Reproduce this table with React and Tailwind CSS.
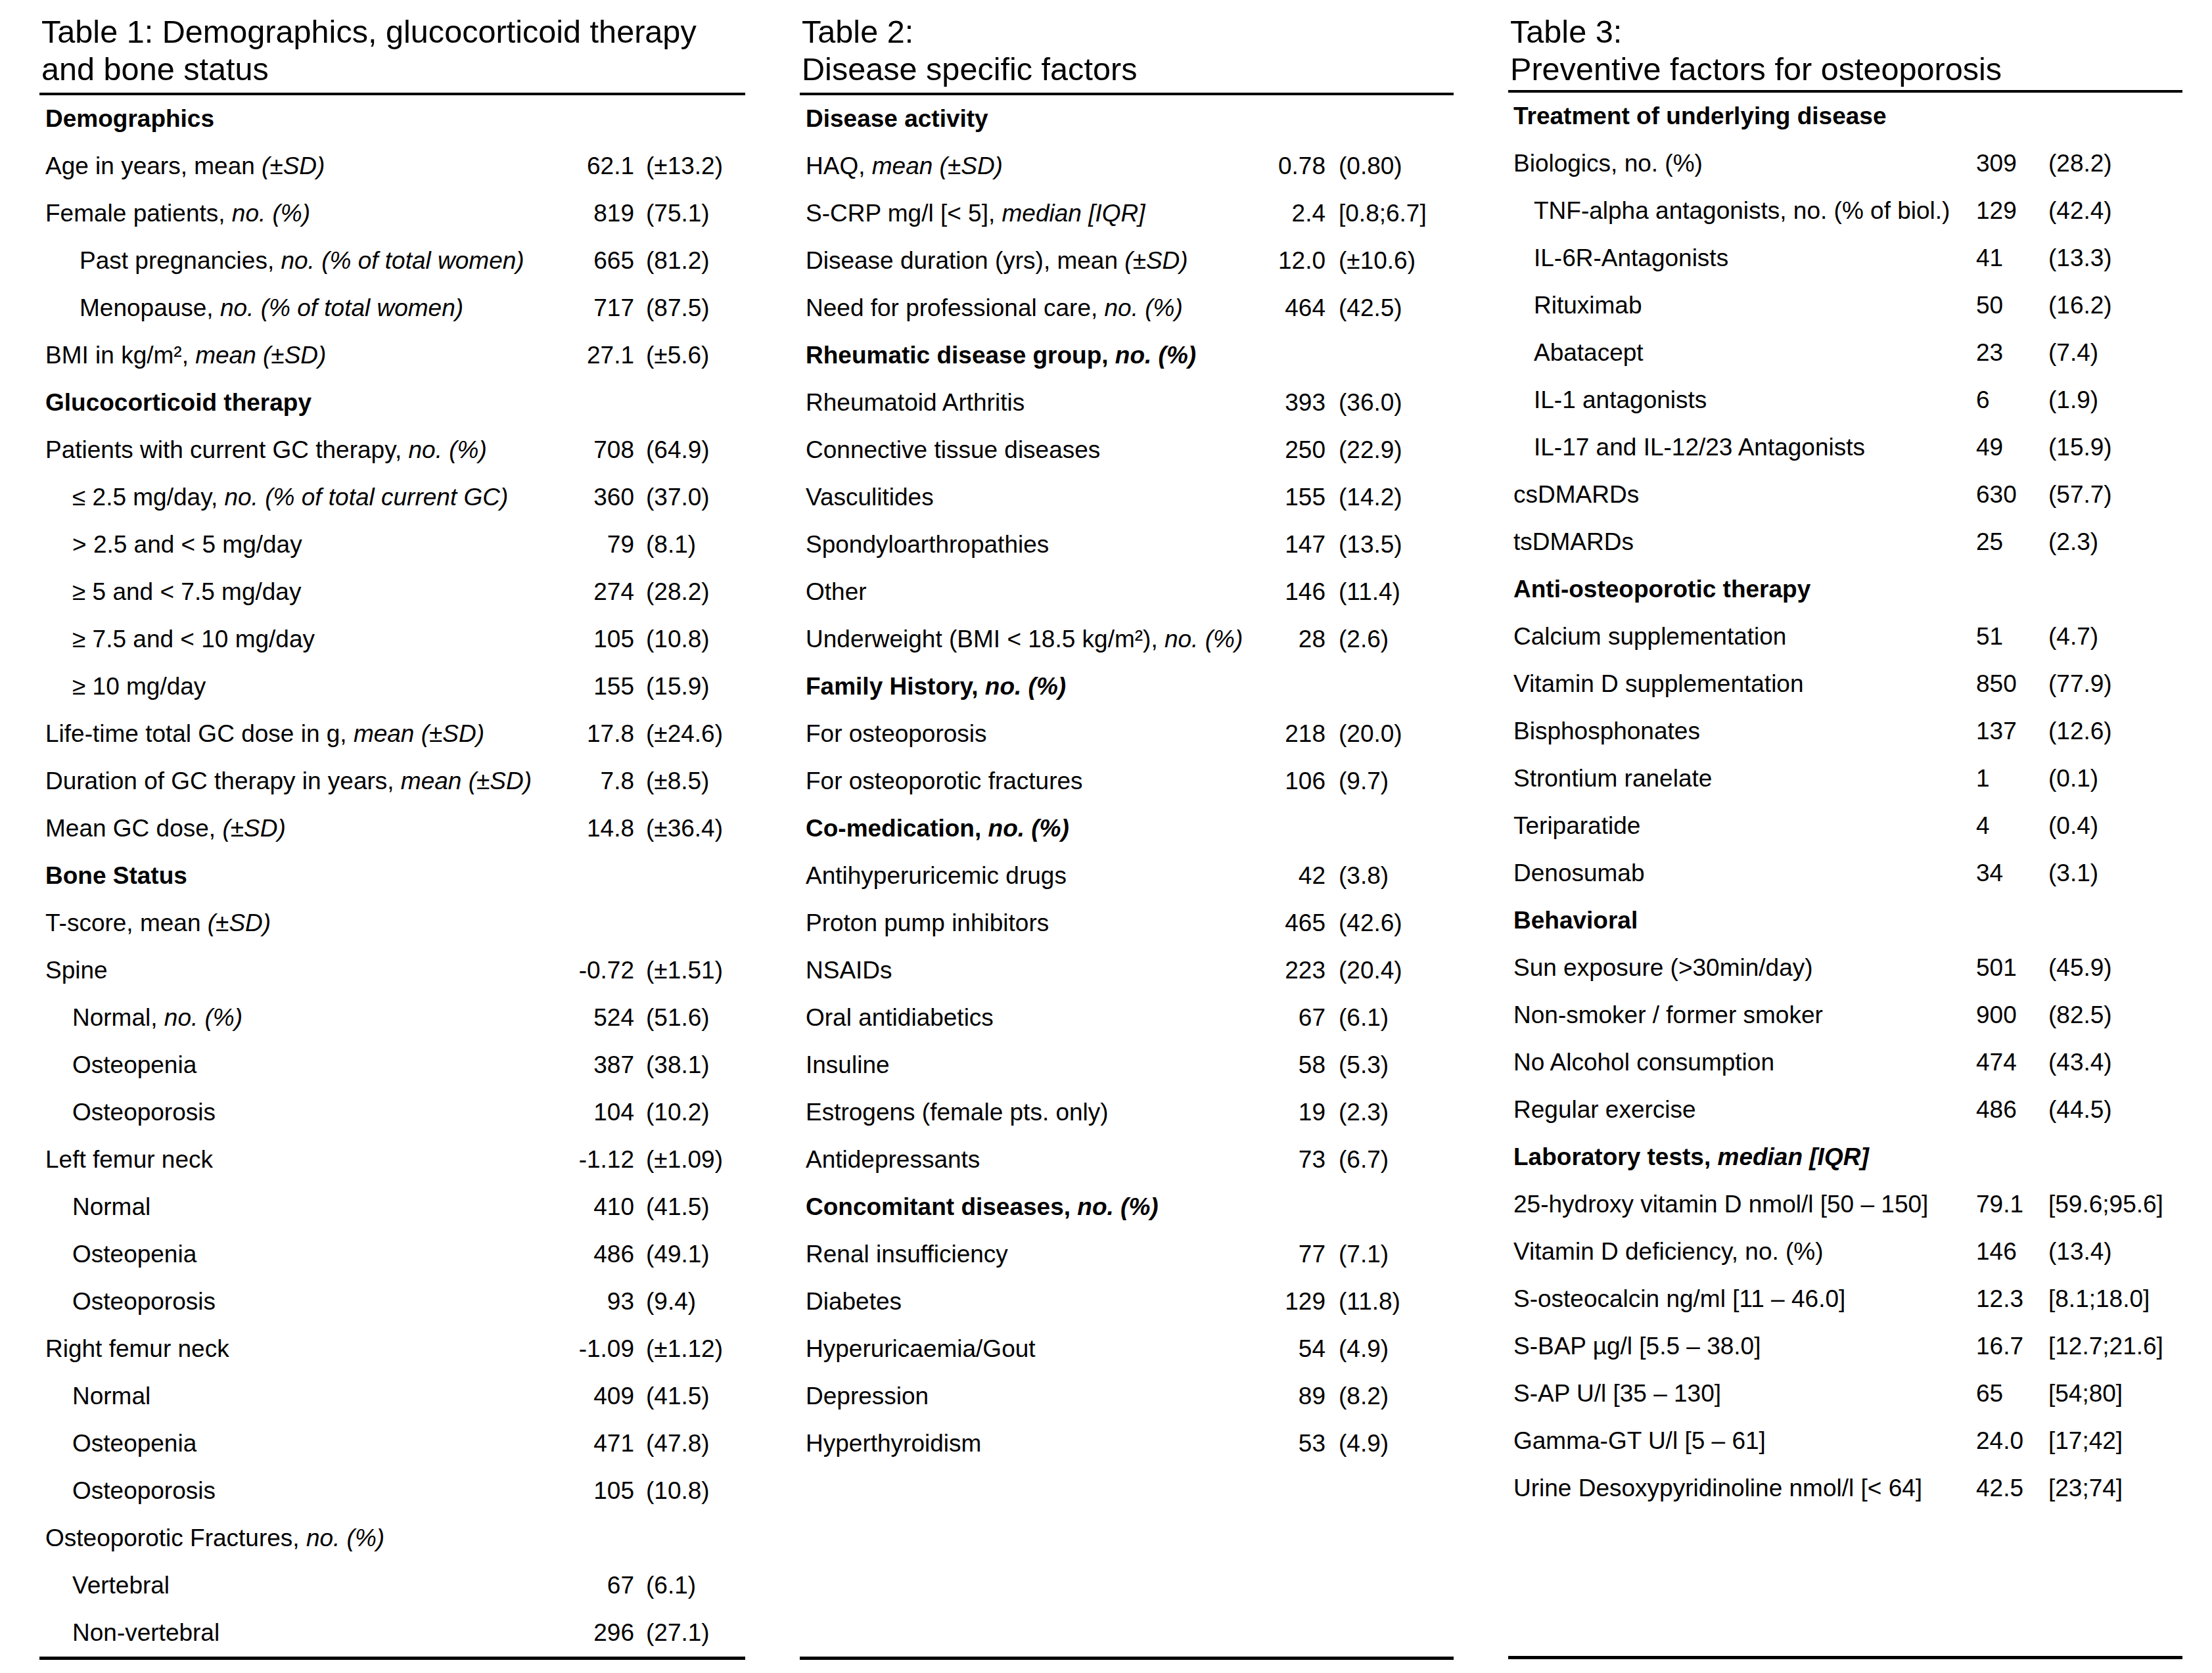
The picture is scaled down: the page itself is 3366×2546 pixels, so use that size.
const I = ({ children }) => <span className="italic">{children}</span>;

const table1 = [
  { h: "Demographics" },
  { l: <>Age in years, mean <I>(±SD)</I></>, n: "62.1", p: "(±13.2)" },
  { l: <>Female patients, <I>no. (%)</I></>, n: "819", p: "(75.1)" },
  { l: <>Past pregnancies, <I>no. (% of total women)</I></>, n: "665", p: "(81.2)", ind: 2 },
  { l: <>Menopause, <I>no. (% of total women)</I></>, n: "717", p: "(87.5)", ind: 2 },
  { l: <>BMI in kg/m², <I>mean (±SD)</I></>, n: "27.1", p: "(±5.6)" },
  { h: "Glucocorticoid therapy" },
  { l: <>Patients with current GC therapy, <I>no. (%)</I></>, n: "708", p: "(64.9)" },
  { l: <>≤ 2.5 mg/day, <I>no. (% of total current GC)</I></>, n: "360", p: "(37.0)", ind: 1 },
  { l: "> 2.5 and < 5 mg/day", n: "79", p: "(8.1)", ind: 1 },
  { l: "≥ 5 and < 7.5 mg/day", n: "274", p: "(28.2)", ind: 1 },
  { l: "≥ 7.5 and < 10 mg/day", n: "105", p: "(10.8)", ind: 1 },
  { l: "≥ 10 mg/day", n: "155", p: "(15.9)", ind: 1 },
  { l: <>Life-time total GC dose in g, <I>mean (±SD)</I></>, n: "17.8", p: "(±24.6)" },
  { l: <>Duration of GC therapy in years, <I>mean (±SD)</I></>, n: "7.8", p: "(±8.5)" },
  { l: <>Mean GC dose, <I>(±SD)</I></>, n: "14.8", p: "(±36.4)" },
  { h: "Bone Status" },
  { l: <>T-score, mean <I>(±SD)</I></> },
  { l: "Spine", n: "-0.72", p: "(±1.51)" },
  { l: <>Normal, <I>no. (%)</I></>, n: "524", p: "(51.6)", ind: 1 },
  { l: "Osteopenia", n: "387", p: "(38.1)", ind: 1 },
  { l: "Osteoporosis", n: "104", p: "(10.2)", ind: 1 },
  { l: "Left femur neck", n: "-1.12", p: "(±1.09)" },
  { l: "Normal", n: "410", p: "(41.5)", ind: 1 },
  { l: "Osteopenia", n: "486", p: "(49.1)", ind: 1 },
  { l: "Osteoporosis", n: "93", p: "(9.4)", ind: 1 },
  { l: "Right femur neck", n: "-1.09", p: "(±1.12)" },
  { l: "Normal", n: "409", p: "(41.5)", ind: 1 },
  { l: "Osteopenia", n: "471", p: "(47.8)", ind: 1 },
  { l: "Osteoporosis", n: "105", p: "(10.8)", ind: 1 },
  { l: <>Osteoporotic Fractures, <I>no. (%)</I></> },
  { l: "Vertebral", n: "67", p: "(6.1)", ind: 1 },
  { l: "Non-vertebral", n: "296", p: "(27.1)", ind: 1 },
];

const table2 = [
  { h: "Disease activity" },
  { l: <>HAQ, <I>mean (±SD)</I></>, n: "0.78", p: "(0.80)" },
  { l: <>S-CRP mg/l [&lt; 5], <I>median [IQR]</I></>, n: "2.4", p: "[0.8;6.7]" },
  { l: <>Disease duration (yrs), mean <I>(±SD)</I></>, n: "12.0", p: "(±10.6)" },
  { l: <>Need for professional care, <I>no. (%)</I></>, n: "464", p: "(42.5)" },
  { h: <>Rheumatic disease group, <I>no. (%)</I></> },
  { l: "Rheumatoid Arthritis", n: "393", p: "(36.0)" },
  { l: "Connective tissue diseases", n: "250", p: "(22.9)" },
  { l: "Vasculitides", n: "155", p: "(14.2)" },
  { l: "Spondyloarthropathies", n: "147", p: "(13.5)" },
  { l: "Other", n: "146", p: "(11.4)" },
  { l: <>Underweight (BMI &lt; 18.5 kg/m²), <I>no. (%)</I></>, n: "28", p: "(2.6)" },
  { h: <>Family History, <I>no. (%)</I></> },
  { l: "For osteoporosis", n: "218", p: "(20.0)" },
  { l: "For osteoporotic fractures", n: "106", p: "(9.7)" },
  { h: <>Co-medication, <I>no. (%)</I></> },
  { l: "Antihyperuricemic drugs", n: "42", p: "(3.8)" },
  { l: "Proton pump inhibitors", n: "465", p: "(42.6)" },
  { l: "NSAIDs", n: "223", p: "(20.4)" },
  { l: "Oral antidiabetics", n: "67", p: "(6.1)" },
  { l: "Insuline", n: "58", p: "(5.3)" },
  { l: "Estrogens (female pts. only)", n: "19", p: "(2.3)" },
  { l: "Antidepressants", n: "73", p: "(6.7)" },
  { h: <>Concomitant diseases, <I>no. (%)</I></> },
  { l: "Renal insufficiency", n: "77", p: "(7.1)" },
  { l: "Diabetes", n: "129", p: "(11.8)" },
  { l: "Hyperuricaemia/Gout", n: "54", p: "(4.9)" },
  { l: "Depression", n: "89", p: "(8.2)" },
  { l: "Hyperthyroidism", n: "53", p: "(4.9)" },
];

const table3 = [
  { h: "Treatment of underlying disease" },
  { l: "Biologics, no. (%)", n: "309", p: "(28.2)" },
  { l: "TNF-alpha antagonists, no. (% of biol.)", n: "129", p: "(42.4)", ind: 1 },
  { l: "IL-6R-Antagonists", n: "41", p: "(13.3)", ind: 1 },
  { l: "Rituximab", n: "50", p: "(16.2)", ind: 1 },
  { l: "Abatacept", n: "23", p: "(7.4)", ind: 1 },
  { l: "IL-1 antagonists", n: "6", p: "(1.9)", ind: 1 },
  { l: "IL-17 and IL-12/23 Antagonists", n: "49", p: "(15.9)", ind: 1 },
  { l: "csDMARDs", n: "630", p: "(57.7)" },
  { l: "tsDMARDs", n: "25", p: "(2.3)" },
  { h: "Anti-osteoporotic therapy" },
  { l: "Calcium supplementation", n: "51", p: "(4.7)" },
  { l: "Vitamin D supplementation", n: "850", p: "(77.9)" },
  { l: "Bisphosphonates", n: "137", p: "(12.6)" },
  { l: "Strontium ranelate", n: "1", p: "(0.1)" },
  { l: "Teriparatide", n: "4", p: "(0.4)" },
  { l: "Denosumab", n: "34", p: "(3.1)" },
  { h: "Behavioral" },
  { l: "Sun exposure (>30min/day)", n: "501", p: "(45.9)" },
  { l: "Non-smoker / former smoker", n: "900", p: "(82.5)" },
  { l: "No Alcohol consumption", n: "474", p: "(43.4)" },
  { l: "Regular exercise", n: "486", p: "(44.5)" },
  { h: <>Laboratory tests, <I>median [IQR]</I></> },
  { l: "25-hydroxy vitamin D nmol/l [50 – 150]", n: "79.1", p: "[59.6;95.6]" },
  { l: "Vitamin D deficiency, no. (%)", n: "146", p: "(13.4)" },
  { l: "S-osteocalcin ng/ml [11 – 46.0]", n: "12.3", p: "[8.1;18.0]" },
  { l: "S-BAP µg/l [5.5 – 38.0]", n: "16.7", p: "[12.7;21.6]" },
  { l: "S-AP U/l [35 – 130]", n: "65", p: "[54;80]" },
  { l: "Gamma-GT U/l [5 – 61]", n: "24.0", p: "[17;42]" },
  { l: "Urine Desoxypyridinoline nmol/l [< 64]", n: "42.5", p: "[23;74]" },
];

// per-table column settings, measured off the original
const cfgs = {
  t1: {
    width: "w-[1074px]",
    gap: "mt-[7px]",
    indents: ["pl-[9px]", "pl-[50px]", "pl-[61px]"],
    num: "w-[140px] shrink-0 text-right",
    par: "w-[169px] shrink-0 pl-[18px]",
  },
  t2: {
    width: "w-[995px]",
    gap: "mt-[7px]",
    indents: ["pl-[9px]", "pl-[9px]", "pl-[9px]"],
    num: "w-[140px] shrink-0 text-right",
    par: "w-[195px] shrink-0 pl-[20px]",
  },
  t3: {
    width: "w-[1026px]",
    gap: "mt-[3px]",
    indents: ["pl-[8px]", "pl-[39px]", "pl-[39px]"],
    num: "w-[110px] shrink-0 text-left",
    par: "w-[204px] shrink-0",
  },
};

const Row = ({ row, cfg }) => {
  if (row.h) {
    return (
      <div className={`flex h-[72px] items-center whitespace-nowrap font-bold ${cfg.indents[0]}`}>
        <span>{row.h}</span>
      </div>
    );
  }
  return (
    <div className="flex h-[72px] items-center whitespace-nowrap">
      <div className={`min-w-0 flex-1 ${cfg.indents[row.ind || 0]}`}>{row.l}</div>
      <div className={cfg.num}>{row.n}</div>
      <div className={cfg.par}>{row.p}</div>
    </div>
  );
};

const Table = ({ title, rows, cfg }) => (
  <div className={`flex flex-col ${cfg.width}`}>
    <div className="pl-[3px] pt-[20px] text-[48.6px] leading-[57px] whitespace-nowrap">
      {title}
    </div>
    <div className={`h-[4px] bg-black ${cfg.gap}`} />
    <div className="text-[37px]">
      {rows.map((row, i) => (
        <Row key={i} row={row} cfg={cfg} />
      ))}
    </div>
    <div className="mt-auto h-[5px] bg-black" />
  </div>
);

export default function App() {
  return (
    <div className="flex h-[2546px] w-[3366px] gap-[83px] bg-white pl-[60px] font-['Liberation_Sans',Arial,sans-serif] text-black">
      <div className="flex h-[2526px]">
        <Table
          title={<>Table 1: Demographics, glucocorticoid therapy<br />and bone status</>}
          rows={table1}
          cfg={cfgs.t1}
        />
      </div>
      <div className="flex h-[2526px]">
        <Table title={<>Table 2:<br />Disease specific factors</>} rows={table2} cfg={cfgs.t2} />
      </div>
      <div className="flex h-[2525px]">
        <Table
          title={<>Table 3:<br />Preventive factors for osteoporosis</>}
          rows={table3}
          cfg={cfgs.t3}
        />
      </div>
    </div>
  );
}
